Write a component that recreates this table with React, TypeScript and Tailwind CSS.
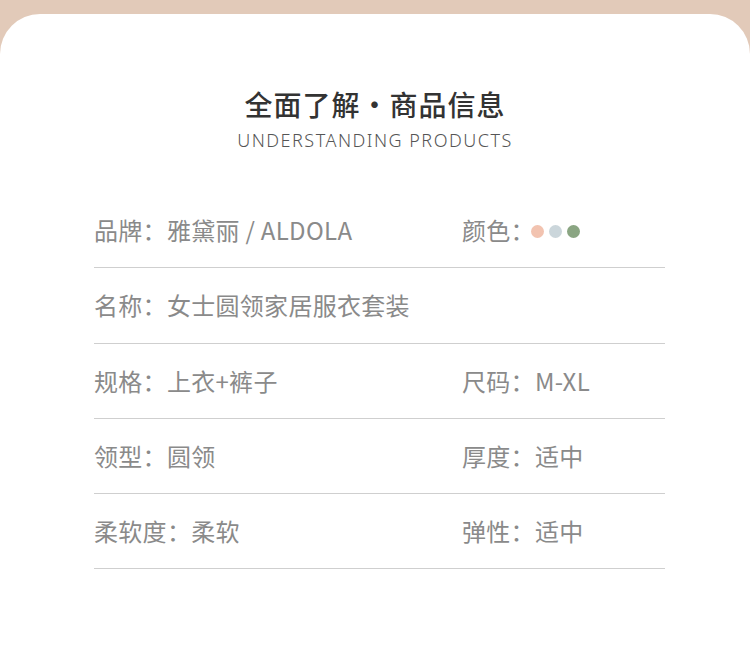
import React from 'react';

const rows: { left: React.ReactNode; right?: React.ReactNode }[] = [
	{
		left: '品牌：雅黛丽 / ALDOLA',
		right: (
			<span className="flex items-center">
				颜色：
				<span className="flex items-center gap-[5px] ml-[-4px] mt-[2px]">
					<span className="w-[13px] h-[13px] rounded-full bg-[#f2c3b0]" />
					<span className="w-[13px] h-[13px] rounded-full bg-[#cbd6db]" />
					<span className="w-[13px] h-[13px] rounded-full bg-[#8aa582]" />
				</span>
			</span>
		),
	},
	{ left: '名称：女士圆领家居服衣套装' },
	{ left: '规格：上衣+裤子', right: '尺码：M-XL' },
	{ left: '领型：圆领', right: '厚度：适中' },
	{ left: '柔软度：柔软', right: '弹性：适中' },
];

const App = () => {
	return (
		<div
			className="w-[750px] h-[665px] bg-[#e2cab9] pt-[14px] overflow-hidden"
			style={{ fontFamily: '"Noto Sans CJK SC", "Noto Sans", sans-serif' }}
		>
			<div className="bg-white h-full rounded-t-[40px] flex flex-col">
				<h1 className="mt-[70px] text-center text-[28px] leading-[40px] font-medium text-[#333333] tracking-[1px]">
					全面了解・商品信息
				</h1>
				<p
					className="mt-[4px] text-center text-[18px] leading-[24px] font-light text-[#555555] tracking-[1.5px]"
					style={{ fontFamily: '"Noto Sans", sans-serif' }}
				>
					UNDERSTANDING PRODUCTS
				</p>
				{/* spec table */}
				<div className="ml-[94px] w-[571px] mt-[41px]">
					{rows.map((row, i) => (
						<div
							key={i}
							className="flex items-center h-[75.25px] border-b border-[#cfcfcf] text-[24px] tracking-[0.3px] text-[#8a8a8a]"
						>
							<div className="w-[368px] shrink-0">{row.left}</div>
							{row.right && <div>{row.right}</div>}
						</div>
					))}
				</div>
			</div>
		</div>
	);
};

export default App;
